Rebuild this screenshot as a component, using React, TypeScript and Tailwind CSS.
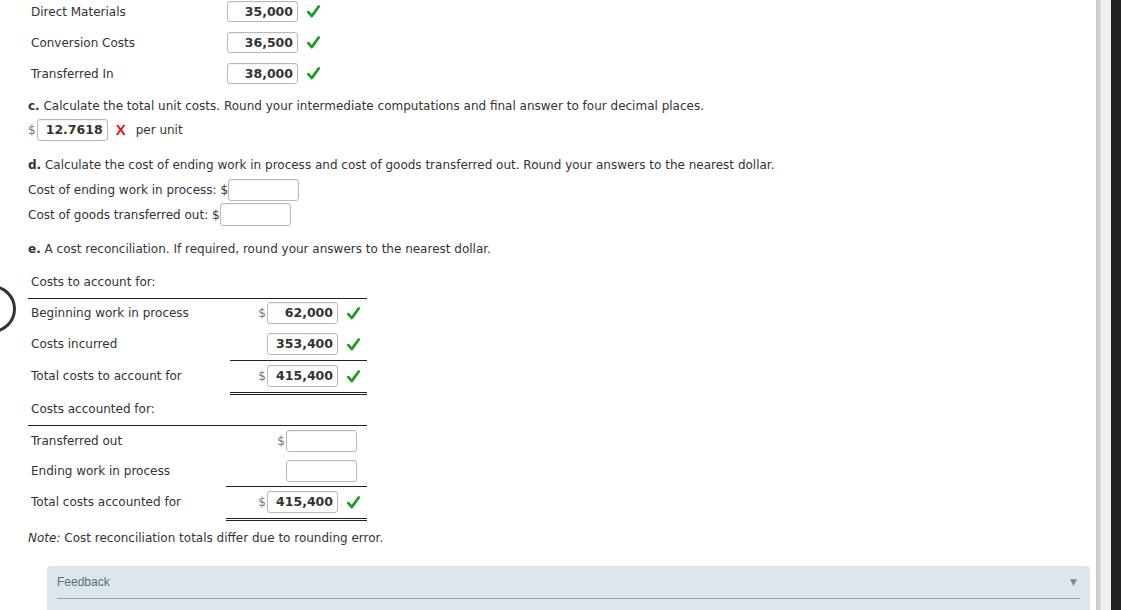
import React from "react";

const Check = () => (
  <svg width="13" height="13" viewBox="0 0 12 12" className="ml-[9px] shrink-0">
    <path d="M1.3 6.6 L4.4 10.2 L10.8 1.4" fill="none" stroke="#1f9d2b" strokeWidth="2.6" strokeLinecap="round" strokeLinejoin="round" />
  </svg>
);

const Box = ({ value, w = "w-[71px]", h = "h-[22px]" }: { value?: string; w?: string; h?: string }) => (
  <div
    className={`${w} ${h} shrink-0 rounded-[3px] border border-[#b9b9b9] bg-white pr-[4px] text-right text-[12.5px] font-bold leading-[20px] text-[#333] shadow-[inset_0_1px_1px_rgba(0,0,0,0.06)]`}
  >
    {value}
  </div>
);

const Dollar = () => <span className="mr-[1px] text-[12px] text-[#777]">$</span>;

function TopRow({ label, value, first }: { label: string; value: string; first?: boolean }) {
  return (
    <div className={`flex h-[21px] items-center ${first ? "" : "mt-[10px]"}`}>
      <span className="w-[199px] pl-[3px]">{label}</span>
      <Box value={value} h="h-[21px]" />
      <Check />
    </div>
  );
}

function RecRow({
  label,
  value,
  dollar,
  check,
  mt,
}: {
  label: string;
  value?: string;
  dollar?: boolean;
  check?: boolean;
  mt: string;
}) {
  return (
    <div className={`flex h-[22px] items-center ${mt}`}>
      <span className="flex-1 pl-[3px]">{label}</span>
      {dollar && <Dollar />}
      <Box value={value} />
      {check ? <div className="flex w-[29px] justify-start"><Check /></div> : <div className="w-[10px]" />}
    </div>
  );
}

export default function App() {
  return (
    <div
      className="relative flex h-[610px] w-full overflow-hidden bg-white text-[12px] leading-[16px] text-[#333]"
      style={{ fontFamily: '"DejaVu Sans", Verdana, sans-serif' }}
    >
      <div className="absolute left-[-32px] top-[285px] h-[48px] w-[48px] rounded-full border-[3px] border-[#333]" />

      <main className="w-[1096px] shrink-0 pl-[28px] pt-[1px]">
        <TopRow label="Direct Materials" value="35,000" first />
        <TopRow label="Conversion Costs" value="36,500" />
        <TopRow label="Transferred In" value="38,000" />

        <p className="mt-[14px]">
          <b>c.</b> Calculate the total unit costs. Round your intermediate computations and final answer to four decimal places.
        </p>
        <div className="mt-[5px] flex h-[22px] items-center">
          <Dollar />
          <Box value="12.7618" />
          <span
            className="ml-[8px] text-[15px] font-bold text-[#e4121b]"
            style={{ fontFamily: '"Liberation Sans", Arial, sans-serif' }}
          >
            X
          </span>
          <span className="ml-[10px]">per unit</span>
        </div>

        <p className="mt-[16px]">
          <b>d.</b> Calculate the cost of ending work in process and cost of goods transferred out. Round your answers to the nearest dollar.
        </p>
        <div className="mt-[6px] flex h-[22px] items-center">
          <span>Cost of ending work in process: $</span>
          <Box />
        </div>
        <div className="mt-[2px] flex h-[23px] items-center">
          <span>Cost of goods transferred out: $</span>
          <Box h="h-[23px]" />
        </div>

        <p className="mt-[15px]">
          <b>e.</b> A cost reconciliation. If required, round your answers to the nearest dollar.
        </p>

        <div className="w-[339px]">
          <p className="mt-[17px] pl-[3px]">Costs to account for:</p>
          <div className="mt-[8px] border-t border-[#222]" />
          <RecRow label="Beginning work in process" value="62,000" dollar check mt="mt-[3px]" />
          <RecRow label="Costs incurred" value="353,400" check mt="mt-[9px]" />
          <div className="ml-[202px] mt-[5px] border-t border-[#222]" />
          <RecRow label="Total costs to account for" value="415,400" dollar check mt="mt-[4px]" />
          <div className="ml-[202px] mt-[5px] border-b-[3px] border-double border-[#222]" />

          <p className="mt-[6px] pl-[3px]">Costs accounted for:</p>
          <div className="mt-[8px] border-t border-[#222]" />
          <RecRow label="Transferred out" dollar mt="mt-[4px]" />
          <RecRow label="Ending work in process" mt="mt-[8px]" />
          <div className="ml-[198px] mt-[4px] border-t border-[#222]" />
          <RecRow label="Total costs accounted for" value="415,400" dollar check mt="mt-[4px]" />
          <div className="ml-[198px] mt-[5px] border-b-[3px] border-double border-[#222]" />
        </div>

        <p className="mt-[9px]">
          <i>Note:</i> Cost reconciliation totals differ due to rounding error.
        </p>

        <div className="ml-[19px] mr-[6px] mt-[20px] h-[60px] rounded-t-[4px] bg-[#dee6ed] px-[10px] pt-[9px]">
          <div className="flex items-center justify-between">
            <span
              className="text-[12px] leading-[14px] text-[#4e7474]"
              style={{ fontFamily: '"Liberation Sans Narrow", "Liberation Sans", Arial, sans-serif' }}
            >
              Feedback
            </span>
            <span className="mr-[3px] text-[9px] leading-[10px] text-[#888]">▼</span>
          </div>
          <div className="mt-[9px] border-t border-[#9aa3a6]" />
        </div>
      </main>

      <div className="flex flex-1">
        <div className="w-[5px] bg-gradient-to-r from-[#c6c6c6] to-[#dadada]" />
        <div className="w-[10px] bg-[#efefef]" />
        <div className="flex-1 bg-[#222]" />
      </div>
    </div>
  );
}
